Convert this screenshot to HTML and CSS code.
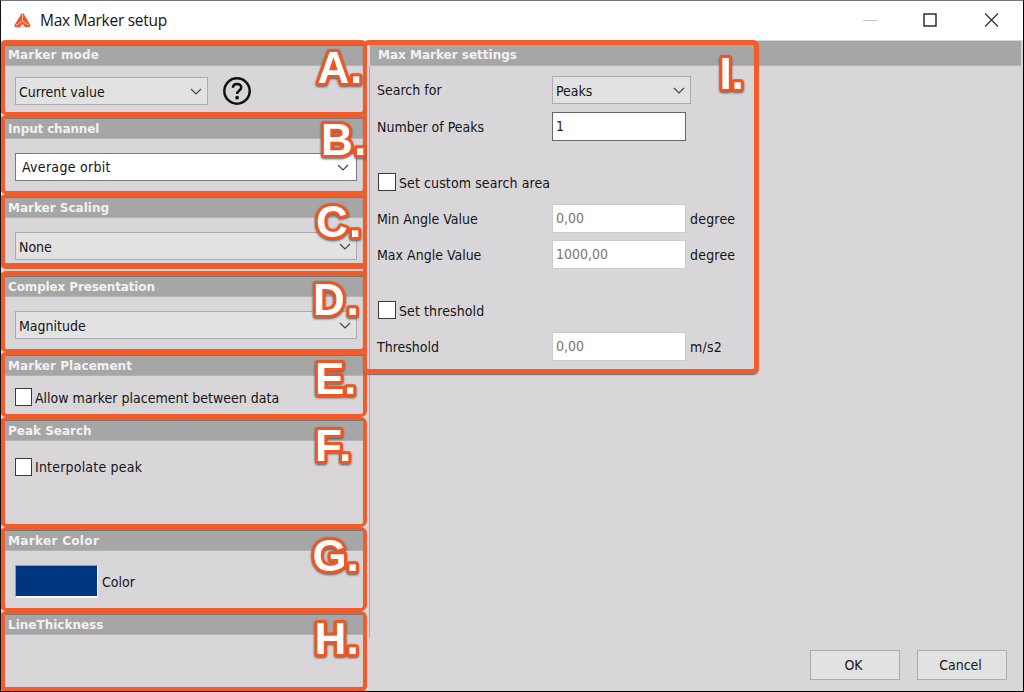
FILE: index.html
```html
<!DOCTYPE html>
<html lang="en">
<head>
<meta charset="utf-8">
<title>Max Marker setup</title>
<link rel="stylesheet" href="styles.css">
</head>
<body>
<div class="window">
  <header class="titlebar">
    <svg class="logo" width="17" height="15" viewBox="0 0 17 15">
      <path d="M7.500 0.500 H9.500 L16.700 12.500 L15.500 14.300 H1.200 L0.200 12.500 Z" fill="#f2562b"/>
      <path d="M8.500 1.500 V8 L2 12.500 M8.500 8 L15 12.500" fill="none" stroke="#ffc3b0" stroke-width="1"/>
      <path d="M5.500 14.400 L8.500 11 L11.500 14.400 Z" fill="#ffe9e2"/>
    </svg>
    <h1 class="title">Max Marker setup</h1>
    <svg class="controls" width="140" height="16" viewBox="0 0 140 16">
      <path d="M1 8.500 H15" stroke="#c4c4c4"/>
      <rect x="62" y="2" width="12" height="12" fill="none" stroke="#111" stroke-width="1.300"/>
      <path d="M123 1.500 L136 14.500 M136 1.500 L123 14.500" stroke="#333" stroke-width="1.300"/>
    </svg>
  </header>
  <main class="content">
    <div class="sidebar">
      <section class="group group-mode">
        <h2>Marker mode</h2>
        <div class="row">
          <div class="select short"><span>Current value</span><svg class="chev" viewBox="0 0 12 7"><path d="M1 1 L6 6 L11 1"/></svg></div>
          <svg class="help" width="28" height="28" viewBox="0 0 28 28">
            <circle cx="14" cy="14" r="12.700"/>
            <path d="M9.900 10.800 C10 5.700 18.200 5.700 18.200 10.500 C18.200 13.600 14.100 13.500 14.100 17"/>
            <circle class="dot" cx="14.100" cy="20.700" r="1.900"/>
          </svg>
        </div>
      </section>
      <section class="group group-channel">
        <h2>Input channel</h2>
        <div class="row"><div class="select editable"><span>Average orbit</span><svg class="chev" viewBox="0 0 12 7"><path d="M1 1 L6 6 L11 1"/></svg></div></div>
      </section>
      <section class="group group-scaling">
        <h2>Marker Scaling</h2>
        <div class="row"><div class="select"><span>None</span><svg class="chev" viewBox="0 0 12 7"><path d="M1 1 L6 6 L11 1"/></svg></div></div>
      </section>
      <section class="group group-complex">
        <h2>Complex Presentation</h2>
        <div class="row"><div class="select"><span>Magnitude</span><svg class="chev" viewBox="0 0 12 7"><path d="M1 1 L6 6 L11 1"/></svg></div></div>
      </section>
      <section class="group group-placement">
        <h2>Marker Placement</h2>
        <div class="check"><i class="box"></i><span>Allow marker placement between data</span></div>
      </section>
      <section class="group group-peak">
        <h2>Peak Search</h2>
        <div class="check"><i class="box"></i><span>Interpolate peak</span></div>
      </section>
      <section class="group group-color">
        <h2>Marker Color</h2>
        <div class="row color-row"><i class="swatch"></i><span>Color</span></div>
      </section>
      <section class="group group-line">
        <h2>LineThickness</h2>
      </section>
    </div>
    <div class="divider"></div>
    <div class="details">
      <h2 class="bar">Max Marker settings</h2>
      <div class="form">
        <div class="field first"><span>Search for</span><div class="select"><span>Peaks</span><svg class="chev" viewBox="0 0 12 7"><path d="M1 1 L6 6 L11 1"/></svg></div></div>
        <div class="field"><span>Number of Peaks</span><div class="input active">1</div></div>
        <div class="check custom"><i class="box"></i><span>Set custom search area</span></div>
        <div class="field"><span>Min Angle Value</span><div class="input">0,00</div><span class="unit">degree</span></div>
        <div class="field"><span>Max Angle Value</span><div class="input">1000,00</div><span class="unit">degree</span></div>
        <div class="check threshold"><i class="box"></i><span>Set threshold</span></div>
        <div class="field"><span>Threshold</span><div class="input">0,00</div><span class="unit">m/s2</span></div>
      </div>
      <footer class="actions"><div class="button">OK</div><div class="button">Cancel</div></footer>
    </div>
  </main>
  <div class="outline"></div>
  <svg class="labels" width="1024" height="692" viewBox="0 0 1024 692">
    <g>
      <text x="317.500 350" y="82.500">A.</text>
      <text x="321 354" y="155">B.</text>
      <text x="316 349" y="236.500">C.</text>
      <text x="313 346.500" y="315">D.</text>
      <text x="315 344" y="394">E.</text>
      <text x="315 339" y="461">F.</text>
      <text x="312.500 346.500" y="571">G.</text>
      <text x="314.500 346.500" y="654">H.</text>
      <text x="719.500 731.500" y="89">I.</text>
    </g>
  </svg>
</div>
</body>
</html>
```
FILE: styles.css
```css
* { box-sizing: border-box; }
body { margin: 0; }
.window {
  position: relative;
  display: flex;
  flex-direction: column;
  width: 1024px;
  height: 692px;
  overflow: hidden;
  background: #d8d6d9;
  border-top: 1px solid #777;
  border-left: 1px solid #111;
  border-right: 1px solid #000;
  border-bottom: 1px solid #000;
  font: 14px/18px "DejaVu Sans Condensed", "DejaVu Sans", sans-serif;
  font-stretch: condensed;
  color: #151515;
  white-space: nowrap;
}
h1, h2 { margin: 0; font-stretch: normal; }
.titlebar {
  display: flex;
  align-items: center;
  flex: none;
  height: 39px;
  padding: 0 21px 0 13px;
  background: #fff;
}
.title {
  flex: 1;
  margin: -2px 0 0 9px;
  font: 400 15.500px/20px "Open Sans", sans-serif;
  letter-spacing: -0.280px;
}
.logo { margin-top: -1px; }
.controls { margin-top: -2px; }
.content { display: flex; flex: 1; min-height: 0; }

.sidebar { flex: none; width: 367px; margin-left: -1px; height: 652px; }
.group {
  border: solid #f25b2a;
  border-width: 3px 4px 3px 5px;
  border-radius: 6px;
}
.group h2, .bar {
  height: 21px;
  padding-left: 3px;
  background: #a6a6a6;
  border-bottom: 1px solid #b4b3b4;
  box-shadow: inset 0 1px #777;
  font: bold 12px/22px "DejaVu Sans", sans-serif;
  color: #f2f2f2;
}
.group-mode h2 { line-height: 20px; letter-spacing: 0.150px; }
.group-channel h2 { letter-spacing: -0.150px; }
.group-complex h2 { letter-spacing: -0.130px; }
.group-placement h2 { letter-spacing: 0.060px; }
.group-color h2 { letter-spacing: 0.330px; }
.group-mode { height: 75px; border-top-width: 5px; }
.group-channel { height: 79px; }
.group-scaling { height: 75px; border-bottom-width: 6px; }
.group-complex { height: 81px; margin-top: 2px; border-top-width: 5px; }
.group-placement { height: 65px; }
.group-peak { height: 110px; }
.group-color { height: 84px; }
.group-line { height: 81px; border-bottom-width: 5px; }

.row { display: flex; align-items: center; padding: 14px 6px 0 10px; }
.group-mode .row { padding-top: 11px; }
.help { margin-left: 15px; fill: none; stroke: #111; stroke-width: 2.500; }
.help .dot { fill: #111; stroke: none; }
.select {
  display: flex;
  align-items: center;
  justify-content: space-between;
  flex: 1;
  height: 28px;
  padding: 1px 5px 0 3px;
  background: #e2e2e2;
  border: 1px solid #acacac;
}
.select.short { flex: none; width: 193px; }
.select.editable { background: #fff; border-color: #7a7a7a; padding: 0 7px 0 6px; letter-spacing: 0.300px; }
.chev { width: 12px; height: 7px; fill: none; stroke: #444; stroke-width: 1.200; }
.check { display: flex; align-items: center; height: 18px; }
.check span { padding-top: 1px; }
.box { width: 18px; height: 18px; margin-right: 3px; background: #fff; border: 1px solid #3a3a3a; }
.group .check { padding-left: 10px; margin-top: 12px; }
.group .box { width: 17px; }
.group-peak .check { margin-top: 17px; letter-spacing: 0.200px; }
.group-peak .check span { padding-top: 0; }
.color-row { padding-top: 14px; }
.swatch {
  width: 83px;
  height: 33px;
  margin-right: 4px;
  background: #003680;
  border: 1px solid;
  border-color: #999 #f6f6f6 #f6f6f6 #999;
  border-bottom-width: 2px;
}

.divider { flex: none; width: 1px; height: 572px; margin: 26px 0 0 2px; background: #aaa; }
.details { display: flex; flex-direction: column; flex: 1; min-width: 0; padding-right: 2px; }
.bar { flex: none; height: 25px; margin-top: 1px; padding: 3px 0 0 8px; box-shadow: none; }
.form { display: flex; flex-direction: column; flex: none; padding: 10px 0 0 8px; gap: 7px; }
.form .field > span:first-child { margin-left: -1px; }
.field {
  display: grid;
  grid-template-columns: 174px 139px;
  align-items: center;
  height: 29px;
}
.field.first { padding-bottom: 2px; }
.field:has(.unit) { grid-template-columns: 174px 134px auto; }
.form .select { width: 139px; }
.input {
  width: 134px;
  height: 29px;
  padding: 4px 3px;
  background: #fff;
  border: 1px solid #ccc;
  color: #777;
}
.input.active { border-color: #666; color: #222; }
.unit { padding-left: 4px; letter-spacing: 0.200px; }
.custom { margin: 25px 0 6px; letter-spacing: 0.100px; }
.threshold { margin: 25px 0 6px; letter-spacing: 0.100px; }
.actions { display: flex; gap: 17px; justify-content: flex-end; margin-top: auto; padding: 0 14px 11px 0; }
.button {
  width: 90px;
  height: 30px;
  padding-right: 3px;
  background: #e2e2e2;
  border: 1px solid #acacac;
  text-align: center;
  line-height: 28px;
}

/* annotation overlay */
.outline {
  position: absolute;
  left: 362px;
  top: 39px;
  width: 396px;
  height: 334px;
  border: 5px solid #f25b2a;
  border-left-width: 4px;
  border-radius: 6px;
  box-shadow: 0 1px 1px #666;
}
.labels { position: absolute; left: -1px; top: -1px; pointer-events: none; }
.labels g {
  font: bold 44px "Liberation Sans", sans-serif;
  fill: #fff;
  stroke: #f2551f;
  stroke-width: 6px;
  stroke-linejoin: round;
  paint-order: stroke;
  filter: drop-shadow(0 1px 1px #555);
}
```
